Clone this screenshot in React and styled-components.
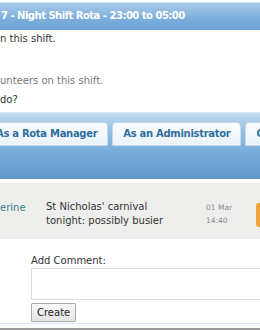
import React from 'react';
import styled, { createGlobalStyle } from 'styled-components';

const GlobalStyle = createGlobalStyle`
  html, body {
    margin: 0;
    padding: 0;
    background: #ffffff;
  }
  body {
    font-family: "DejaVu Sans", Verdana, sans-serif;
    font-size: 10px;
    color: #333333;
    overflow: hidden;
  }
`;

const App = () => (
  <Page>
    <GlobalStyle />
    <ShiftHeader>7 - Night Shift Rota - 23:00 to 05:00</ShiftHeader>
    <Intro>
      <IntroLine>n this shift.</IntroLine>
      <MutedLine>unteers on this shift.</MutedLine>
      <IntroLine $gap={5}>do?</IntroLine>
    </Intro>
    <TabBar>
      <Tab>As a Rota Manager</Tab>
      <Tab>As an Administrator</Tab>
      <Tab>Other</Tab>
    </TabBar>
    <CommentRow>
      <Author>erine</Author>
      <Message>St Nicholas' carnival tonight: possibly busier</Message>
      <Stamp>
        <span>01 Mar</span>
        <span>14:40</span>
      </Stamp>
      <DeleteTag />
    </CommentRow>
    <CommentForm>
      <Label htmlFor="comment">Add Comment:</Label>
      <CommentBox id="comment" />
      <CreateButton type="button">Create</CreateButton>
    </CommentForm>
    <Footer />
  </Page>
);

export default App;

const Page = styled.div`
  width: 260px;
  height: 330px;
  overflow: hidden;
  display: flex;
  flex-direction: column;
`;

const ShiftHeader = styled.div`
  margin-top: 2px;
  height: 27px;
  flex-shrink: 0;
  border-top: 1px solid #d3e4f2;
  background: linear-gradient(#a9cae8, #7aaddb 60%, #6ea4d4);
  color: #ffffff;
  font-weight: bold;
  font-size: 10px;
  letter-spacing: -0.5px;
  line-height: 26px;
  padding-left: 1px;
  white-space: nowrap;
`;

const Intro = styled.div`
  display: flex;
  flex-direction: column;
  padding-top: 2px;
  height: 80px;
  flex-shrink: 0;
`;

const IntroLine = styled.p`
  margin: ${(p) => p.$gap || 0}px 0 0;
  line-height: 14px;
  color: #333333;
`;

const MutedLine = styled(IntroLine)`
  margin-top: 28px;
  color: #777777;
`;

const TabBar = styled.div`
  height: 57px;
  flex-shrink: 0;
  border-top: 1px solid #d6e7f5;
  background: linear-gradient(#c2dcf0, #8fbce2 30%, #6fa6d5 70%, #6199cb);
  display: flex;
  align-items: flex-start;
  gap: 4px;
  padding-top: 9px;
  margin-left: -15px;
  white-space: nowrap;
`;

const Tab = styled.div`
  flex-shrink: 0;
  height: 22px;
  line-height: 22px;
  padding: 0 10px;
  border: 1px solid #c5dbec;
  border-radius: 4px 4px 0 0;
  background: linear-gradient(#fbfdfe, #eaf3fa);
  color: #2e6e9e;
  font-weight: bold;
  letter-spacing: -0.3px;
`;

const CommentRow = styled.div`
  margin-top: 4px;
  height: 56px;
  flex-shrink: 0;
  background: #eeeeec;
  display: grid;
  grid-template-columns: 46px 160px 50px 1fr;
  align-items: start;
  padding-top: 18px;
  box-sizing: border-box;
`;

const Author = styled.span`
  color: #3b7f8c;
  line-height: 13px;
`;

const Message = styled.span`
  max-width: 128px;
  line-height: 14px;
  color: #333333;
  margin-top: -1px;
`;

const Stamp = styled.span`
  display: flex;
  flex-direction: column;
  font-size: 7.5px;
  line-height: 13px;
  color: #888888;
`;

const DeleteTag = styled.span`
  margin-top: 2px;
  width: 8px;
  height: 24px;
  border-radius: 3px 0 0 3px;
  background: #f0a33c;
`;

const CommentForm = styled.div`
  display: flex;
  flex-direction: column;
  align-items: flex-start;
  padding: 15px 0 0 31px;
  height: 85px;
  box-sizing: border-box;
  flex-shrink: 0;
  border-bottom: 1px solid #d8e7f3;
`;

const Label = styled.label`
  line-height: 13px;
  color: #333333;
`;

const CommentBox = styled.textarea`
  margin: 1px 0 0;
  width: 260px;
  height: 32px;
  box-sizing: border-box;
  border: 1px solid #dddddd;
  resize: none;
  padding: 2px;
  font-family: inherit;
`;

const CreateButton = styled.button`
  margin-top: 3px;
  height: 19px;
  padding: 0 5px;
  border: 1px solid #aaaaaa;
  border-radius: 1px;
  background: linear-gradient(#f8f8f8, #e4e4e4);
  font-family: "DejaVu Sans", sans-serif;
  font-size: 10px;
  color: #222222;
`;

const Footer = styled.div`
  margin-top: 4px;
  flex: 1;
  background: #9b9b9b;
`;
